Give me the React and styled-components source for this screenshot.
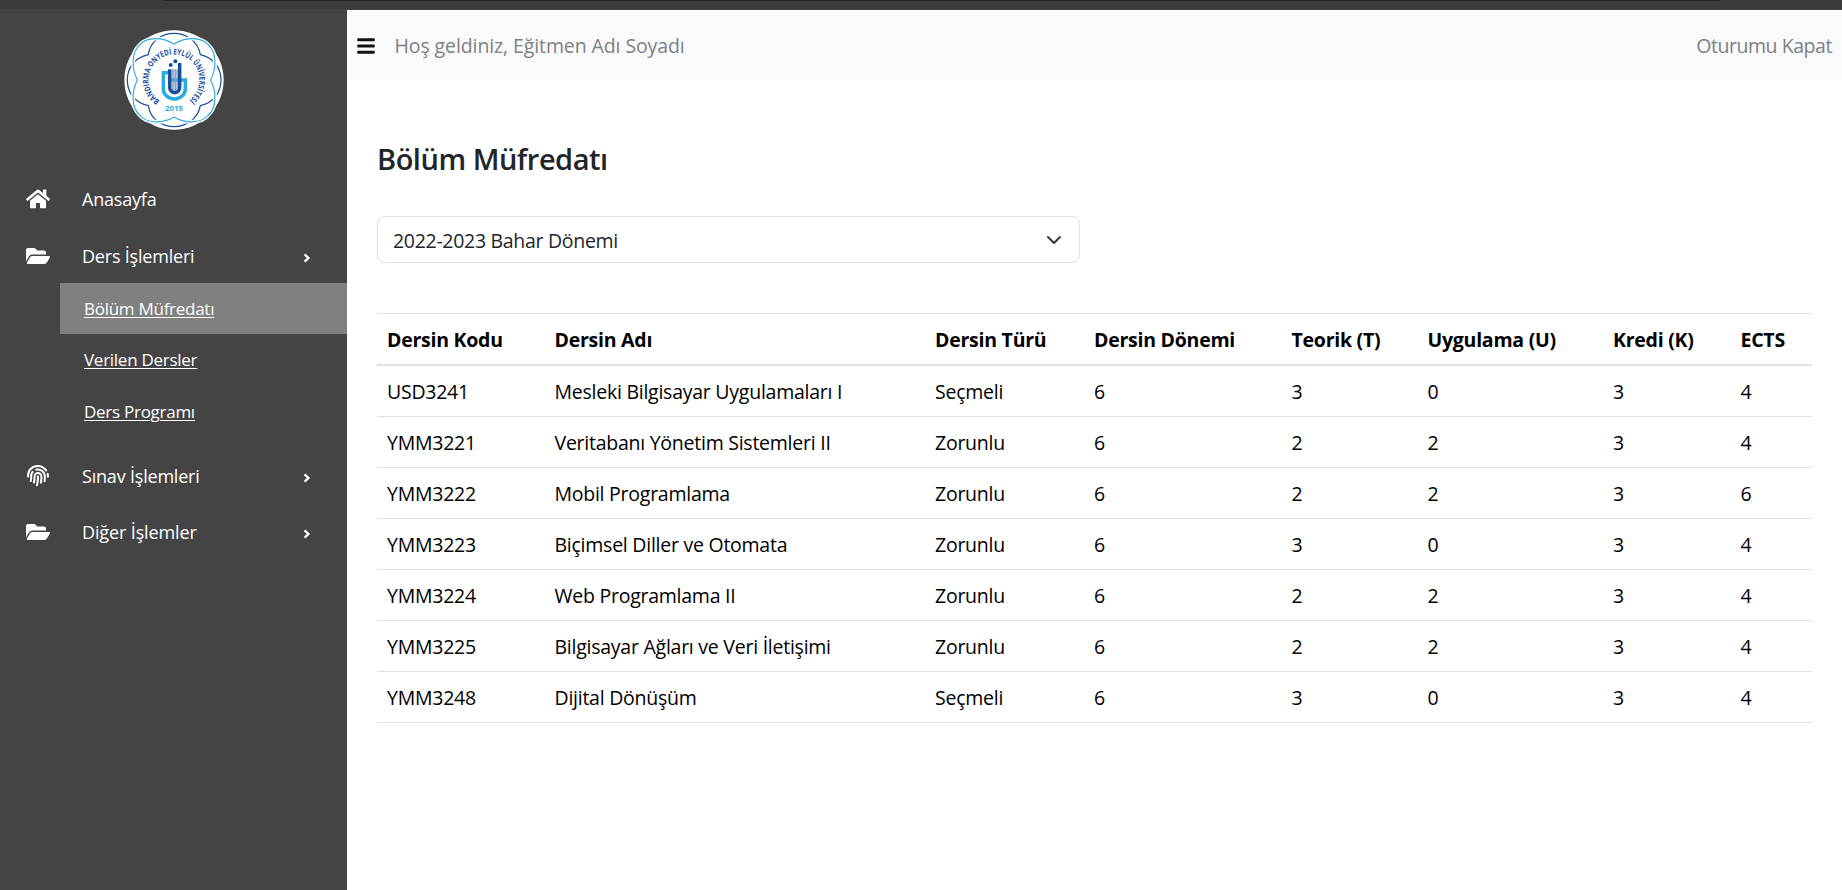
import React from "react";
import styled, { createGlobalStyle, css } from "styled-components";
import { FaHome, FaFolderOpen, FaFingerprint, FaBars } from "react-icons/fa";

const GlobalStyle = createGlobalStyle`
  *, *::before, *::after { box-sizing: border-box; }
  body {
    margin: 0;
    background: #fff;
    color: #212529;
    font-family: "Open Sans", "Noto Sans", sans-serif;
    font-size: 19.5px;
    overflow: hidden;
  }
`;

const Page = styled.div`
  display: flex;
  flex-direction: column;
  height: 100vh;
  background: #444;
`;

const WindowEdge = styled.div`
  flex: 0 0 9px;
  background: #3b3b3b;
  padding: 0 122px 0 163px;
  &::before {
    content: "";
    display: block;
    height: 1px;
    background: #262626;
  }
`;

const Shell = styled.div`
  flex: 1;
  display: flex;
  min-height: 0;
`;

const Sidebar = styled.nav`
  flex: 0 0 347px;
  background: #444;
  color: #fff;
`;

const LogoBox = styled.div`
  display: flex;
  justify-content: center;
  height: 162px;
  padding-top: 21px;
  svg { width: 100px; height: 100px; }
`;

const NavItem = styled.a`
  display: flex;
  align-items: center;
  height: 56px;
  padding: ${(p) => (p.$expanded ? "2px" : "0")} 36px 0 25.5px;
  font-size: 18px;
  letter-spacing: ${(p) => p.$tracking || "-0.2px"};
  white-space: nowrap;
  color: #fff;
`;

const NavIcon = styled.span`
  display: flex;
  width: 56.5px;
  padding-bottom: 1px;
  svg { width: 24px; height: 21.8px; }
`;

const NavLabel = styled.span`
  flex: 1;
`;

const ArrowSvg = styled.svg`
  width: 8px;
  height: 10px;
  margin-top: 4px;
`;

const SubMenu = styled.div`
  padding: 0 0 11px 60px;
`;

const SubLink = styled.a`
  display: flex;
  align-items: center;
  height: ${(p) => (p.$active ? 51 : 51.5)}px;
  padding-left: 24px;
  font-size: 17px;
  letter-spacing: -0.27px;
  color: #fff;
  text-decoration: underline;
  text-decoration-thickness: 1px;
  text-underline-offset: 2px;
  ${(p) => p.$active && css`background: #808080;`}
`;

const Main = styled.main`
  flex: 1;
  display: flex;
  flex-direction: column;
  min-width: 0;
  margin-top: 1px;
  background: #fff;
`;

const TopBar = styled.header`
  display: flex;
  align-items: center;
  height: 70px;
  padding: 0 10px;
  background: #f8fafc;
  color: #808080;
`;

const MenuButton = styled.span`
  display: flex;
  color: #111;
  margin-right: 19.5px;
  padding-top: 1px;
  svg { width: 18px; height: 20px; }
`;

const Welcome = styled.span`
  flex: 1;
  letter-spacing: -0.1px;
`;

const SignOut = styled.a`
  letter-spacing: -0.45px;
`;

const Content = styled.section`
  padding: 61px 30px 0;
`;

const Title = styled.h1`
  margin: 0 0 39px;
  font-size: 29px;
  font-weight: 600;
  line-height: 36px;
  letter-spacing: -0.48px;
`;

const TermSelect = styled.div`
  display: flex;
  align-items: center;
  justify-content: space-between;
  width: 703px;
  height: 47px;
  margin-bottom: 50px;
  padding: 1px 17px 0 15px;
  border: 1px solid #dee2e6;
  border-radius: 7.5px;
  letter-spacing: -0.3px;
  svg { width: 16px; height: 16px; margin-bottom: 1px; }
`;

const Table = styled.table`
  width: 1435px;
  table-layout: fixed;
  border-spacing: 0;
  color: #000;
  letter-spacing: -0.25px;
`;

const Th = styled.th`
  width: ${(p) => p.$width}px;
  height: 53px;
  padding: 0 0 0 10px;
  border-top: 1px solid #dee2e6;
  border-bottom: 2px solid #dee2e6;
  font-weight: 700;
  text-align: left;
  white-space: nowrap;
`;

const Td = styled.td`
  height: 51px;
  padding: 0 0 0 10px;
  border-bottom: 1px solid #dee2e6;
  white-space: nowrap;
`;

const columns = [
  ["Dersin Kodu", 167.5],
  ["Dersin Adı", 380.5],
  ["Dersin Türü", 159],
  ["Dersin Dönemi", 197.5],
  ["Teorik (T)", 136],
  ["Uygulama (U)", 185.5],
  ["Kredi (K)", 127.5],
  ["ECTS", 81.5],
];

const courses = [
  ["USD3241", "Mesleki Bilgisayar Uygulamaları I", "Seçmeli", 6, 3, 0, 3, 4],
  ["YMM3221", "Veritabanı Yönetim Sistemleri II", "Zorunlu", 6, 2, 2, 3, 4],
  ["YMM3222", "Mobil Programlama", "Zorunlu", 6, 2, 2, 3, 6],
  ["YMM3223", "Biçimsel Diller ve Otomata", "Zorunlu", 6, 3, 0, 3, 4],
  ["YMM3224", "Web Programlama II", "Zorunlu", 6, 2, 2, 3, 4],
  ["YMM3225", "Bilgisayar Ağları ve Veri İletişimi", "Zorunlu", 6, 2, 2, 3, 4],
  ["YMM3248", "Dijital Dönüşüm", "Seçmeli", 6, 3, 0, 3, 4],
];

const DARK = "#164f9c";
const LIGHT = "#29abe2";
const PETALS =
  "M149 42C112 20 66 20 46 45C22 66 20 112 39 150C20 188 22 234 46 255C66 280 112 282 149 262C186 282 232 280 252 255C276 234 278 188 259 150C278 112 276 66 252 45C232 20 186 20 149 42Z";

function Logo() {
  return (
    <svg viewBox="0 0 298 300" fontFamily="Open Sans, sans-serif" fontWeight="700">
      <circle cx="149" cy="150" r="149" fill="#fff" />
      <path
        d="M72 74C78 30 116 10 149 10C182 10 220 30 228 74C270 84 290 116 290 150C290 184 270 218 228 227C220 270 182 290 149 290C116 290 78 270 72 227C28 218 9 184 9 150C9 116 28 84 72 74Z"
        fill="none" stroke={DARK} strokeWidth="3.6"
      />
      <path d={PETALS} fill="none" stroke="#fff" strokeWidth="12" />
      <path d={PETALS} fill="none" stroke={LIGHT} strokeWidth="3.4" />
      <path id="ring" d="M106 212A76 76 0 1 1 192 212" fill="none" />
      <text fontSize="24" fill={DARK}>
        <textPath href="#ring" textLength="382" lengthAdjust="spacingAndGlyphs">
          BANDIRMA ONYEDİ EYLÜL ÜNİVERSİTESİ
        </textPath>
      </text>
      <path d="M131 128H117V177A33 30 0 0 0 183 177V150H131" fill="none" stroke={LIGHT} strokeWidth="10.500" />
      <path d="M143.500 118V182M148.500 118V186M153.500 118V186M158.500 118V182" stroke="#7f9fc4" strokeWidth="3.800" />
      <path d="M136 118V172A15 16 0 0 0 166 172V99" fill="none" stroke={DARK} strokeWidth="10.500" />
      <circle cx="139" cy="105" r="6" fill={DARK} />
      <circle cx="153" cy="94" r="6" fill={DARK} />
      <text x="149" y="244" textAnchor="middle" fontSize="20.500" fill={LIGHT} textLength="54" lengthAdjust="spacingAndGlyphs">
        2015
      </text>
    </svg>
  );
}

function Arrow() {
  return (
    <ArrowSvg viewBox="0 0 8 10" fill="none" stroke="#fff" strokeWidth="2.3">
      <path d="M1.600 1.400L5.400 5L1.600 8.600" />
    </ArrowSvg>
  );
}

function Item({ icon: Icon, label, arrow, tracking, expanded }) {
  return (
    <NavItem $tracking={tracking} $expanded={expanded}>
      <NavIcon><Icon /></NavIcon>
      <NavLabel>{label}</NavLabel>
      {arrow && <Arrow />}
    </NavItem>
  );
}

export default function App() {
  return (
    <Page>
      <GlobalStyle />
      <WindowEdge />
      <Shell>
        <Sidebar>
          <LogoBox><Logo /></LogoBox>
          <Item icon={FaHome} label="Anasayfa" />
          <Item icon={FaFolderOpen} label="Ders İşlemleri" arrow expanded />
          <SubMenu>
            <SubLink $active>Bölüm Müfredatı</SubLink>
            <SubLink>Verilen Dersler</SubLink>
            <SubLink>Ders Programı</SubLink>
          </SubMenu>
          <Item icon={FaFingerprint} label="Sınav İşlemleri" arrow />
          <Item icon={FaFolderOpen} label="Diğer İşlemler" arrow tracking="-0.13px" />
        </Sidebar>
        <Main>
          <TopBar>
            <MenuButton><FaBars /></MenuButton>
            <Welcome>Hoş geldiniz, Eğitmen Adı Soyadı</Welcome>
            <SignOut>Oturumu Kapat</SignOut>
          </TopBar>
          <Content>
            <Title>Bölüm Müfredatı</Title>
            <TermSelect>
              2022-2023 Bahar Dönemi
              <svg viewBox="0 0 16 16" fill="none" stroke="#343a40" strokeWidth="2" strokeLinecap="round" strokeLinejoin="round">
                <path d="m2 5 6 6 6-6" />
              </svg>
            </TermSelect>
            <Table>
              <thead>
                <tr>
                  {columns.map(([name, width]) => <Th key={name} $width={width}>{name}</Th>)}
                </tr>
              </thead>
              <tbody>
                {courses.map((row) => (
                  <tr key={row[0]}>
                    {row.map((value, i) => <Td key={i}>{value}</Td>)}
                  </tr>
                ))}
              </tbody>
            </Table>
          </Content>
        </Main>
      </Shell>
    </Page>
  );
}
